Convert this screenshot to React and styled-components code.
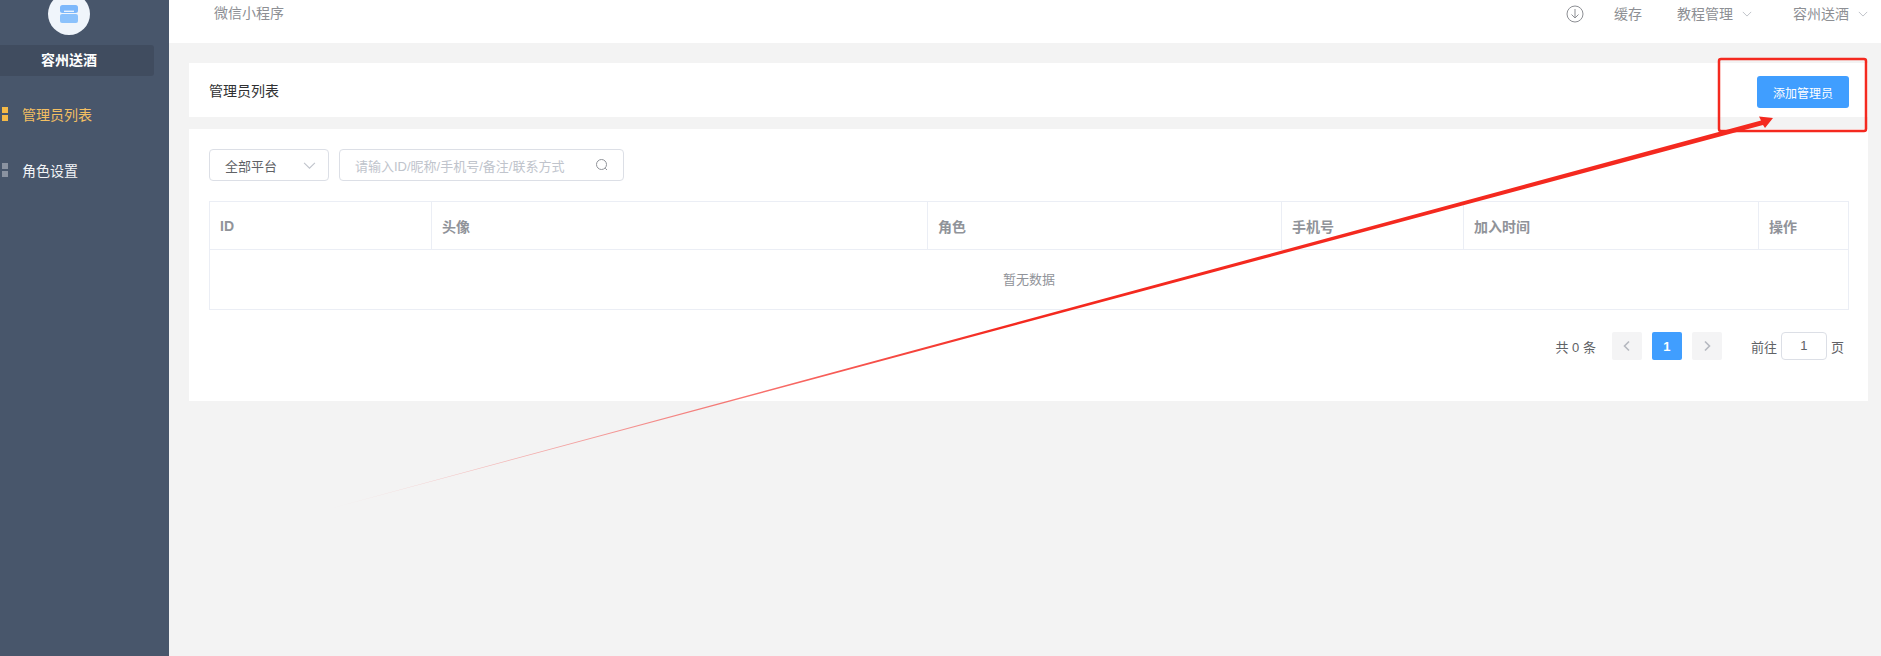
import React from 'react';
import styled, { createGlobalStyle } from 'styled-components';

const Global = createGlobalStyle`
  html, body { margin: 0; padding: 0; background: #f3f3f3; }
  body { font-family: "Liberation Sans", "Noto Sans CJK SC", sans-serif; font-size: 14px; color: #515a6e; }
  #root { width: 1881px; height: 656px; overflow: hidden; }
`;

const Page = styled.div`
  position: relative;
  display: flex;
  width: 1881px;
  height: 656px;
  overflow: hidden;
`;
const Sidebar = styled.aside`
  width: 169px;
  flex: none;
  background: #48566b;
  display: flex;
  flex-direction: column;
  align-items: flex-start;
`;
const LogoCircle = styled.div`
  width: 42px;
  height: 42px;
  margin: -7px 0 10px 48px;
  border-radius: 50%;
  background: #f0f5fb;
  display: flex;
  align-items: center;
  justify-content: center;
`;
const Shop = styled.div`
  width: 154px;
  height: 31px;
  background: #404c5f;
  border-radius: 0 3px 3px 0;
  color: #fff;
  font-size: 14px;
  font-weight: 700;
  line-height: 31px;
  text-align: center;
  padding-right: 16px;
  box-sizing: border-box;
  margin-bottom: 10px;
`;
const MenuItem = styled.div`
  height: 56px;
  display: flex;
  align-items: center;
  gap: 14px;
  padding-left: 2px;
  font-size: 14px;
  color: ${p => (p.$active ? '#f3bf62' : '#f2f4f7')};
`;
const Dots = styled.span`
  width: 6px;
  height: 14px;
  display: flex;
  flex-direction: column;
  justify-content: space-between;
  &::before, &::after {
    content: '';
    height: 6px;
    background: ${p => (p.$active ? '#f5b946' : '#8b93a1')};
  }
`;
const Main = styled.div`
  flex: 1;
  min-width: 0;
  display: flex;
  flex-direction: column;
`;
const Header = styled.header`
  height: 43px;
  flex: none;
  background: #fff;
  display: flex;
  align-items: flex-start;
  justify-content: space-between;
  padding: 4px 0 0 45px;
  box-sizing: border-box;
  color: #8d8f94;
  font-size: 14px;
  line-height: 18px;
`;
const HeaderRight = styled.div`
  display: flex;
  align-items: center;
  height: 18px;
  margin-top: 1px;
  padding-right: 13px;
`;
const HeaderItem = styled.span`
  display: inline-flex;
  align-items: center;
  margin-left: ${p => p.$ml}px;
  gap: 9px;
`;
const Content = styled.main`
  flex: 1;
  padding: 20px 13px 0 20px;
  display: flex;
  flex-direction: column;
  gap: 12px;
`;
const TitleCard = styled.section`
  height: 54px;
  background: #fff;
  display: flex;
  align-items: center;
  justify-content: space-between;
  padding: 0 19px 0 20px;
  color: #303133;
  font-size: 14px;
`;
const PrimaryButton = styled.button`
  width: 92px;
  height: 32px;
  margin-top: 4px;
  border: 0;
  border-radius: 3px;
  background: #409eff;
  color: #fff;
  font: inherit;
  font-size: 12px;
  padding: 0;
`;
const ListCard = styled.section`
  height: 272px;
  background: #fff;
  padding: 20px;
  box-sizing: border-box;
`;
const Filters = styled.div`
  display: flex;
  gap: 10px;
  margin-bottom: 20px;
`;
const Select = styled.div`
  width: 120px;
  height: 32px;
  box-sizing: border-box;
  border: 1px solid #dcdfe6;
  border-radius: 4px;
  display: flex;
  align-items: center;
  justify-content: space-between;
  padding: 0 12px 0 15px;
  color: #606266;
  font-size: 13px;
`;
const Search = styled.div`
  width: 285px;
  height: 32px;
  box-sizing: border-box;
  border: 1px solid #dcdfe6;
  border-radius: 4px;
  display: flex;
  align-items: center;
  justify-content: space-between;
  padding: 0 14px 0 15px;
  color: #c0c4cc;
  font-size: 13px;
`;
const Table = styled.div`
  border: 1px solid #ebeef5;
  width: 1640px;
  box-sizing: border-box;
`;
const HeadRow = styled.div`
  display: grid;
  grid-template-columns: 221px 496px 354px 182px 295px 1fr;
  height: 48px;
  border-bottom: 1px solid #ebeef5;
  box-sizing: border-box;
`;
const HeadCell = styled.div`
  display: flex;
  align-items: center;
  padding-left: 10px;
  border-left: ${p => (p.$first ? '0' : '1px solid #ebeef5')};
  color: #909399;
  font-size: 14px;
  font-weight: 700;
`;
const Empty = styled.div`
  height: 59px;
  line-height: 59px;
  text-align: center;
  color: #909399;
  font-size: 13px;
`;
const Pagination = styled.div`
  display: flex;
  justify-content: flex-end;
  align-items: center;
  height: 28px;
  margin-top: 22px;
  padding-right: 4px;
  color: #606266;
  font-size: 13px;
`;
const PageBtn = styled.div`
  width: 30px;
  height: 28px;
  margin-left: ${p => p.$ml || 0}px;
  border-radius: 2px;
  background: ${p => (p.$active ? '#409eff' : '#f4f4f5')};
  color: ${p => (p.$active ? '#fff' : '#c0c4cc')};
  font-weight: 700;
  font-size: 13px;
  display: flex;
  align-items: center;
  justify-content: center;
`;
const Jump = styled.span`
  margin-left: 29px;
  display: inline-flex;
  align-items: center;
  gap: 4px;
`;
const JumpInput = styled.div`
  width: 46px;
  height: 28px;
  box-sizing: border-box;
  border: 1px solid #dcdfe6;
  border-radius: 4px;
  text-align: center;
  line-height: 26px;
`;
const Annotation = styled.svg`
  position: absolute;
  inset: 0;
  width: 1881px;
  height: 656px;
  pointer-events: none;
`;

const Chevron = ({ size = 12, color = '#b5b8bf', dir = 'down' }) => (
  <svg width={size} height={size} viewBox="0 0 12 12" fill="none" stroke={color} strokeWidth="1">
    {dir === 'down' && <path d="M1 3.5 6 8.5 11 3.5" />}
    {dir === 'left' && <path d="M8 1.5 3.5 6 8 10.5" strokeWidth="1.6" />}
    {dir === 'right' && <path d="M4 1.5 8.5 6 4 10.5" strokeWidth="1.6" />}
  </svg>
);

export default function App() {
  return (
    <Page>
      <Global />
      <Sidebar>
        <LogoCircle>
          <svg width="18" height="18" viewBox="0 0 18 18">
            <rect x="0" y="0" width="18" height="8" rx="2.5" fill="#7db8fb" />
            <rect x="0" y="9" width="18" height="9" rx="2" fill="#8cc2fc" />
            <rect x="4" y="5.6" width="10" height="1.4" fill="#e8f2fe" />
          </svg>
        </LogoCircle>
        <Shop>容州送酒</Shop>
        <MenuItem $active><Dots $active />管理员列表</MenuItem>
        <MenuItem><Dots />角色设置</MenuItem>
      </Sidebar>
      <Main>
        <Header>
          <span>微信小程序</span>
          <HeaderRight>
            <svg width="18" height="18" viewBox="0 0 18 18" fill="none" stroke="#8d8f94" strokeWidth="1">
              <circle cx="9" cy="9" r="8" />
              <path d="M9 4v9M5.5 9.5 9 13l3.5-3.5" />
            </svg>
            <HeaderItem $ml={30}>缓存</HeaderItem>
            <HeaderItem $ml={35}>教程管理<Chevron size={10} /></HeaderItem>
            <HeaderItem $ml={41}>容州送酒<Chevron size={10} /></HeaderItem>
          </HeaderRight>
        </Header>
        <Content>
          <TitleCard>
            管理员列表
            <PrimaryButton>添加管理员</PrimaryButton>
          </TitleCard>
          <ListCard>
            <Filters>
              <Select>全部平台<Chevron size={13} color="#c0c4cc" /></Select>
              <Search>
                请输入ID/昵称/手机号/备注/联系方式
                <svg width="14" height="14" viewBox="0 0 14 14" fill="none" stroke="#909399" strokeWidth="1">
                  <circle cx="6.5" cy="6.5" r="5" />
                  <path d="M10.2 10.2 12 12" />
                </svg>
              </Search>
            </Filters>
            <Table>
              <HeadRow>
                <HeadCell $first>ID</HeadCell>
                <HeadCell>头像</HeadCell>
                <HeadCell>角色</HeadCell>
                <HeadCell>手机号</HeadCell>
                <HeadCell>加入时间</HeadCell>
                <HeadCell>操作</HeadCell>
              </HeadRow>
              <Empty>暂无数据</Empty>
            </Table>
            <Pagination>
              <span>共 0 条</span>
              <PageBtn $ml={16}><Chevron dir="left" /></PageBtn>
              <PageBtn $ml={10} $active>1</PageBtn>
              <PageBtn $ml={10}><Chevron dir="right" /></PageBtn>
              <Jump>前往<JumpInput>1</JumpInput>页</Jump>
            </Pagination>
          </ListCard>
        </Content>
      </Main>
      <Annotation viewBox="0 0 1881 656">
        <defs>
          <linearGradient id="tail" x1="325" y1="510" x2="1000" y2="325" gradientUnits="userSpaceOnUse">
            <stop offset="0" stopColor="#f4292a" stopOpacity="0.05" />
            <stop offset="1" stopColor="#f4291f" />
          </linearGradient>
        </defs>
        <rect x="1719" y="59" width="147" height="72" rx="2" fill="none" stroke="#f4291f" strokeWidth="2.5" />
        <polygon
          points="325,510 1761,120.5 1759,116.5 1773,118 1765,128 1763,125 325,510"
          fill="url(#tail)"
        />
      </Annotation>
    </Page>
  );
}
